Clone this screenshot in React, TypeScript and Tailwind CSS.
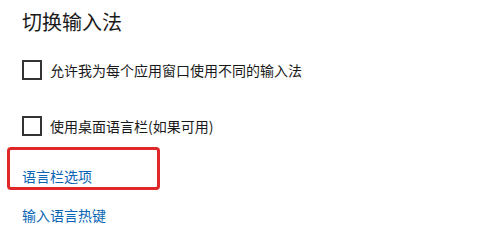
export default function App() {
  const font = { fontFamily: '"Noto Sans CJK SC", "Noto Sans", sans-serif' };
  return (
    <div className="relative w-[477px] h-[246px] bg-white overflow-hidden" style={font}>
      <div className="pl-[22px] pt-[9px] flex flex-col">
        <div className="text-[20px] leading-[26px] text-[#1a1a1a]">切换输入法</div>
        <div className="mt-[25px] flex items-center h-[20px]">
          <div className="w-[20px] h-[20px] border-2 border-[#333333] box-border" />
          <span className="ml-[8px] text-[14px] leading-[20px] text-[#1a1a1a]">允许我为每个应用窗口使用不同的输入法</span>
        </div>
        <div className="mt-[36px] flex items-center h-[20px]">
          <div className="w-[20px] h-[20px] border-2 border-[#333333] box-border" />
          <span className="ml-[8px] text-[14px] leading-[20px] text-[#1a1a1a]">使用桌面语言栏(如果可用)</span>
        </div>
        <div className="mt-[30px] text-[14px] leading-[20px] text-[#0a66b5]">语言栏选项</div>
        <div className="mt-[19px] text-[14px] leading-[20px] text-[#0a66b5]">输入语言热键</div>
      </div>
      <div className="absolute left-[7px] top-[147px] w-[153px] h-[43px] border-[3px] border-[#e0282a] rounded-[4px]" />
    </div>
  );
}
